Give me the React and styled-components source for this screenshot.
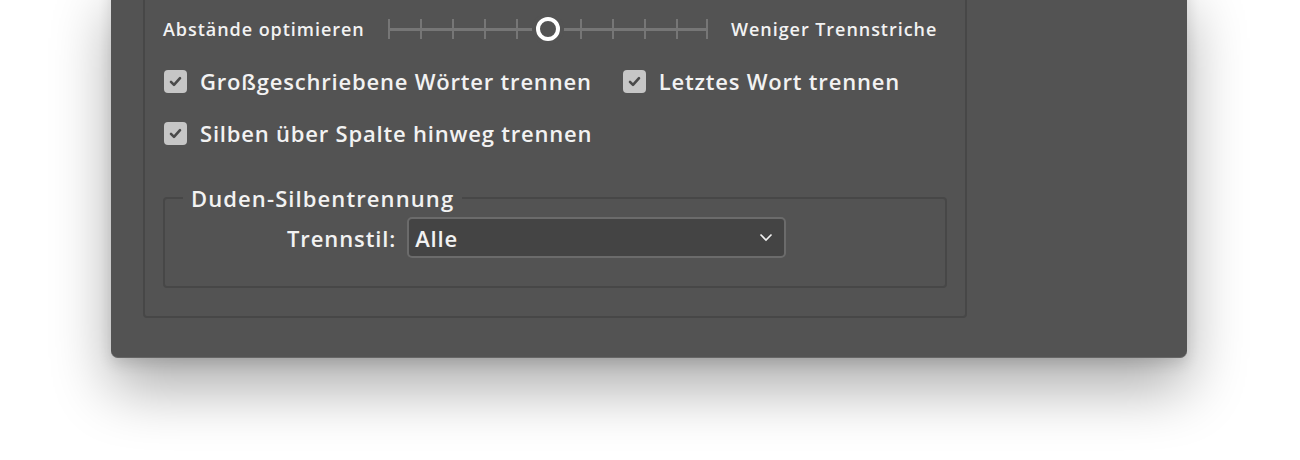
import React from "react";
import styled, { createGlobalStyle } from "styled-components";

const Global = createGlobalStyle`
  html, body { margin: 0; padding: 0; background: #ffffff; }
  body { font-family: "Open Sans", "Noto Sans", sans-serif; overflow: hidden; }
  * { box-sizing: border-box; }
`;

const Page = styled.div`
  width: 1300px;
  height: 460px;
  padding-left: 111px;
  overflow: hidden;
`;

const Dialog = styled.div`
  width: 1076px;
  margin-top: -20px;
  background: #535353;
  border-radius: 0 0 7px 7px;
  border-bottom: 1px solid #666666;
  padding: 0 0 39px 32px;
  box-shadow: 0 30px 60px rgba(0, 0, 0, 0.33), 0 6px 14px rgba(0, 0, 0, 0.12);
`;

const Group = styled.div`
  width: 824px;
  border: 2px solid #474747;
  border-radius: 4px;
  padding: 33px 18px 28px 18px;
  display: flex;
  flex-direction: column;
`;

const SliderRow = styled.div`
  height: 28px;
  display: flex;
  align-items: center;
`;

const SmallLabel = styled.span`
  font-size: 18px;
  font-weight: 600;
  letter-spacing: 0.95px;
  color: #f2f2f2;
  white-space: nowrap;
  width: ${(p) => (p.$w ? `${p.$w}px` : "auto")};
`;

const Slider = styled.div`
  position: relative;
  width: 320px;
  height: 28px;
  margin: 0 23px 0 23px;
`;

const Track = styled.div`
  position: absolute;
  left: 0;
  right: 0;
  top: 13px;
  height: 3px;
  background: #767676;
`;

const Tick = styled.div`
  position: absolute;
  top: 4px;
  width: 2px;
  height: 20px;
  background: #767676;
`;

const Thumb = styled.div`
  position: absolute;
  top: 2px;
  left: 148px;
  width: 24px;
  height: 24px;
  border-radius: 50%;
  border: 4px solid #ffffff;
  background: #535353;
  box-shadow: 0 0 0 4px #535353;
`;

const CheckRow = styled.div`
  height: 30px;
  display: flex;
  align-items: center;
  margin-top: ${(p) => p.$mt}px;
`;

const CheckItem = styled.label`
  display: flex;
  align-items: center;
  gap: 13px;
  margin-left: 1px;
  margin-right: ${(p) => p.$mr || 0}px;
  font-size: 22px;
  font-weight: 600;
  letter-spacing: 0.8px;
  color: #f2f2f2;
  white-space: nowrap;
`;

const Box = styled.span`
  width: 23px;
  height: 23px;
  border-radius: 4px;
  background: #c6c6c6;
  display: flex;
  align-items: center;
  justify-content: center;
  flex: none;
`;

const Fieldset = styled.fieldset`
  margin: 36px 0 0 0;
  width: 784px;
  border: 2px solid #474747;
  border-radius: 4px;
  padding: 5px 18px 28px 18px;
  min-width: 0;
`;

const Legend = styled.legend`
  padding: 0 8px;
  height: 28px;
  line-height: 28px;
  font-size: 22px;
  font-weight: 600;
  letter-spacing: 1.1px;
  color: #f2f2f2;
`;

const FieldRow = styled.div`
  display: flex;
  align-items: center;
  padding-left: 104px;
  gap: 11px;
`;

const FieldLabel = styled.span`
  font-size: 22px;
  font-weight: 600;
  letter-spacing: 0.9px;
  color: #f2f2f2;
`;

const Select = styled.div`
  width: 379px;
  height: 41px;
  background: #444444;
  border: 2px solid #6b6b6b;
  border-radius: 5px;
  display: flex;
  align-items: center;
  justify-content: space-between;
  padding: 0 11px 0 6px;
  font-size: 22px;
  font-weight: 600;
  letter-spacing: 0.8px;
  color: #f2f2f2;
`;

function Check() {
  return (
    <Box>
      <svg width="15" height="15" viewBox="0 0 15 15">
        <path d="M3 7.8 L6 10.8 L12 4.2" fill="none" stroke="#4a4a4a" strokeWidth="2.6" strokeLinecap="round" strokeLinejoin="round" />
      </svg>
    </Box>
  );
}

export default function App() {
  const ticks = [0, 1, 2, 3, 4, 6, 7, 8, 9, 10];
  return (
    <>
      <Global />
      <Page>
        <Dialog>
          <Group>
            <SliderRow>
              <SmallLabel $w={202}>Abstände optimieren</SmallLabel>
              <Slider>
                <Track />
                {ticks.map((i) => (
                  <Tick key={i} style={{ left: Math.min(i * 32, 318) }} />
                ))}
                <Thumb />
              </Slider>
              <SmallLabel>Weniger Trennstriche</SmallLabel>
            </SliderRow>
            <CheckRow $mt={23}>
              <CheckItem $mr={30}>
                <Check />
                Großgeschriebene Wörter trennen
              </CheckItem>
              <CheckItem>
                <Check />
                Letztes Wort trennen
              </CheckItem>
            </CheckRow>
            <CheckRow $mt={22}>
              <CheckItem>
                <Check />
                Silben über Spalte hinweg trennen
              </CheckItem>
            </CheckRow>
            <Fieldset>
              <Legend>Duden-Silbentrennung</Legend>
              <FieldRow>
                <FieldLabel>Trennstil:</FieldLabel>
                <Select>
                  Alle
                  <svg width="14" height="9" viewBox="0 0 14 9">
                    <path d="M1.5 1.5 L7 7 L12.5 1.5" fill="none" stroke="#f2f2f2" strokeWidth="1.6" />
                  </svg>
                </Select>
              </FieldRow>
            </Fieldset>
          </Group>
        </Dialog>
      </Page>
    </>
  );
}
